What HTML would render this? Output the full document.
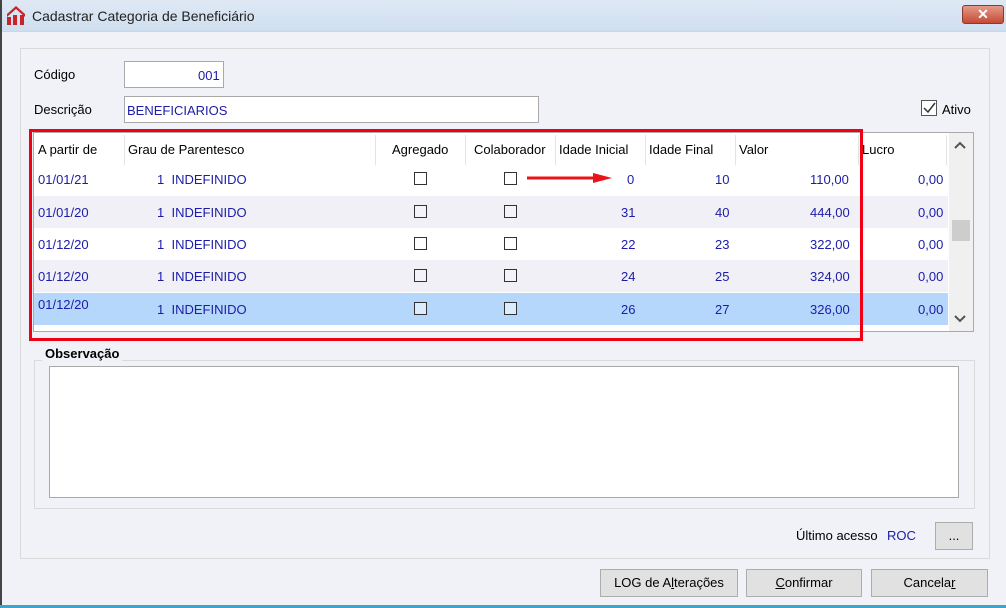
<!DOCTYPE html>
<html><head><meta charset="utf-8"><style>
*{box-sizing:border-box;margin:0;padding:0}
body{width:1006px;height:608px;overflow:hidden;font-family:"Liberation Sans",sans-serif;font-size:13px;color:#000;background:#f1f2f7;position:relative}
.a{position:absolute}
.t{position:absolute;white-space:nowrap}
.blue{color:#1c1ca8}
.cb{position:absolute;width:13px;height:13px;border:1px solid #333;background:#fff}
.btn{position:absolute;height:28px;background:#e1e1e1;border:1px solid #adadad;text-align:center;line-height:26px;font-size:13px}
.sep{position:absolute;top:2px;width:1px;height:30px;background:#e4e4e4}
</style></head><body>
<div class="a" style="left:0;top:0;width:1006px;height:32px;background:linear-gradient(#dfe9f5,#cfdeef);border-bottom:1px solid #c9d6e6"></div>
<div class="a" style="left:0;top:0;width:2px;height:608px;background:#444"></div>
<div class="a" style="left:0;top:605px;width:1006px;height:3px;background:#3aa7c8"></div>
<svg class="a" style="left:7px;top:6px" width="19" height="20" viewBox="0 0 19 20"><path d="M0 8 L9 0 L18 8 L18 11 L9 3 L0 11Z" fill="#c8252a"/><rect x="0" y="11" width="4" height="8" fill="#c8252a"/><rect x="6" y="9" width="4" height="10" fill="#c8252a"/><rect x="13" y="9" width="4" height="10" fill="#c8252a"/></svg>
<div class="t" style="left:32px;top:8px;font-size:14px;color:#222">Cadastrar Categoria de Beneficiário</div>
<div class="a" style="left:962px;top:5px;width:42px;height:19px;border-radius:3px;background:linear-gradient(#e59a8a,#c44a35);border:1px solid #8a3a2e;color:#fff;text-align:center;font-weight:bold;font-size:14px;line-height:17px">✕</div>

<div class="a" style="left:20px;top:48px;width:970px;height:511px;border:1px solid #dadada"></div>
<div class="t" style="left:34px;top:67px">Código</div>
<div class="a" style="left:124px;top:61px;width:100px;height:27px;border:1px solid #aaa;background:#fff"></div>
<div class="t blue" style="left:198px;top:68px">001</div>
<div class="t" style="left:34px;top:102px">Descrição</div>
<div class="a" style="left:124px;top:96px;width:415px;height:27px;border:1px solid #aaa;background:#fff"></div>
<div class="t blue" style="left:127px;top:103px">BENEFICIARIOS</div>
<div class="a" style="left:921px;top:100px;width:16px;height:16px;border:1px solid #555;background:#fff"></div>
<svg class="a" style="left:922px;top:101px" width="14" height="14"><path d="M2 7 L6 11 L13 2" stroke="#333" stroke-width="1.5" fill="none"/></svg>
<div class="t" style="left:942px;top:102px">Ativo</div>

<div class="a" style="left:33px;top:132px;width:941px;height:200px;border:1px solid #aaa;background:#fff"></div>
<div class="a" style="left:34px;top:133px;width:914px;height:32px;background:#fff"></div>
<div class="sep" style="left:124px;top:135px"></div><div class="sep" style="left:375px;top:135px"></div><div class="sep" style="left:465px;top:135px"></div><div class="sep" style="left:555px;top:135px"></div><div class="sep" style="left:645px;top:135px"></div><div class="sep" style="left:735px;top:135px"></div><div class="sep" style="left:858px;top:135px"></div><div class="sep" style="left:946px;top:135px"></div>
<div class="t" style="left:38px;top:142px">A partir de</div>
<div class="t" style="left:128px;top:142px">Grau de Parentesco</div>
<div class="t" style="left:392px;top:142px">Agregado</div>
<div class="t" style="left:474px;top:142px">Colaborador</div>
<div class="t" style="left:559px;top:142px">Idade Inicial</div>
<div class="t" style="left:649px;top:142px">Idade Final</div>
<div class="t" style="left:739px;top:142px">Valor</div>
<div class="t" style="left:862px;top:142px">Lucro</div>

<div class="a" style="left:34px;top:196px;width:914px;height:32px;background:#f0f0f6"></div>
<div class="a" style="left:34px;top:260px;width:914px;height:32px;background:#f0f0f6"></div>
<div class="a" style="left:34px;top:293px;width:914px;height:32px;background:#b4d7fb"></div>

<div class="blue">
<div class="t" style="left:38px;top:172px">01/01/21</div><div class="t" style="left:157px;top:172px">1&nbsp; INDEFINIDO</div><div class="t" style="left:627px;top:172px">0</div><div class="t" style="left:715px;top:172px">10</div><div class="t" style="left:810px;top:172px">110,00</div><div class="t" style="left:918px;top:172px">0,00</div>
<div class="t" style="left:38px;top:205px">01/01/20</div><div class="t" style="left:157px;top:205px">1&nbsp; INDEFINIDO</div><div class="t" style="left:621px;top:205px">31</div><div class="t" style="left:715px;top:205px">40</div><div class="t" style="left:810px;top:205px">444,00</div><div class="t" style="left:918px;top:205px">0,00</div>
<div class="t" style="left:38px;top:237px">01/12/20</div><div class="t" style="left:157px;top:237px">1&nbsp; INDEFINIDO</div><div class="t" style="left:621px;top:237px">22</div><div class="t" style="left:715px;top:237px">23</div><div class="t" style="left:810px;top:237px">322,00</div><div class="t" style="left:918px;top:237px">0,00</div>
<div class="t" style="left:38px;top:269px">01/12/20</div><div class="t" style="left:157px;top:269px">1&nbsp; INDEFINIDO</div><div class="t" style="left:621px;top:269px">24</div><div class="t" style="left:715px;top:269px">25</div><div class="t" style="left:810px;top:269px">324,00</div><div class="t" style="left:918px;top:269px">0,00</div>
<div class="t" style="left:38px;top:297px">01/12/20</div><div class="t" style="left:157px;top:302px">1&nbsp; INDEFINIDO</div><div class="t" style="left:621px;top:302px">26</div><div class="t" style="left:715px;top:302px">27</div><div class="t" style="left:810px;top:302px">326,00</div><div class="t" style="left:918px;top:302px">0,00</div>
</div>
<div class="cb" style="left:414px;top:172px"></div><div class="cb" style="left:504px;top:172px"></div>
<div class="cb" style="left:414px;top:205px;background:#f4f4f8"></div><div class="cb" style="left:504px;top:205px;background:#f4f4f8"></div>
<div class="cb" style="left:414px;top:237px"></div><div class="cb" style="left:504px;top:237px"></div>
<div class="cb" style="left:414px;top:269px;background:#f4f4f8"></div><div class="cb" style="left:504px;top:269px;background:#f4f4f8"></div>
<div class="cb" style="left:414px;top:302px;background:#dcecfc"></div><div class="cb" style="left:504px;top:302px;background:#dcecfc"></div>

<div class="a" style="left:949px;top:133px;width:24px;height:198px;background:#f0f0f0"></div>
<div class="a" style="left:952px;top:220px;width:18px;height:21px;background:#cdcdcd"></div>
<svg class="a" style="left:954px;top:141px" width="12" height="8"><path d="M1 7 L6 2 L11 7" stroke="#555" stroke-width="2" fill="none"/></svg>
<svg class="a" style="left:954px;top:315px" width="12" height="8"><path d="M1 1 L6 6 L11 1" stroke="#555" stroke-width="2" fill="none"/></svg>

<svg class="a" style="left:527px;top:172px" width="86" height="12"><path d="M0 6 L70 6" stroke="#e8141a" stroke-width="3"/><path d="M66 1 L85 6 L66 11Z" fill="#e8141a"/></svg>
<div class="a" style="left:29px;top:129px;width:834px;height:212px;border:3px solid #f00014"></div>

<div class="a" style="left:34px;top:360px;width:941px;height:149px;border:1px solid #dadada"></div>
<div class="t" style="left:42px;top:346px;font-weight:bold;background:#f1f2f7;padding:0 3px 0 3px">Observação</div>
<div class="a" style="left:49px;top:366px;width:910px;height:132px;border:1px solid #aaa;background:#fff"></div>

<div class="t" style="left:796px;top:528px">Último acesso</div>
<div class="t blue" style="left:887px;top:528px">ROC</div>
<div class="btn" style="left:935px;top:522px;width:38px">...</div>
<div class="btn" style="left:600px;top:569px;width:138px">LOG de A<u>l</u>terações</div>
<div class="btn" style="left:746px;top:569px;width:116px"><u>C</u>onfirmar</div>
<div class="btn" style="left:871px;top:569px;width:117px">Cancela<u>r</u></div>
</body></html>
